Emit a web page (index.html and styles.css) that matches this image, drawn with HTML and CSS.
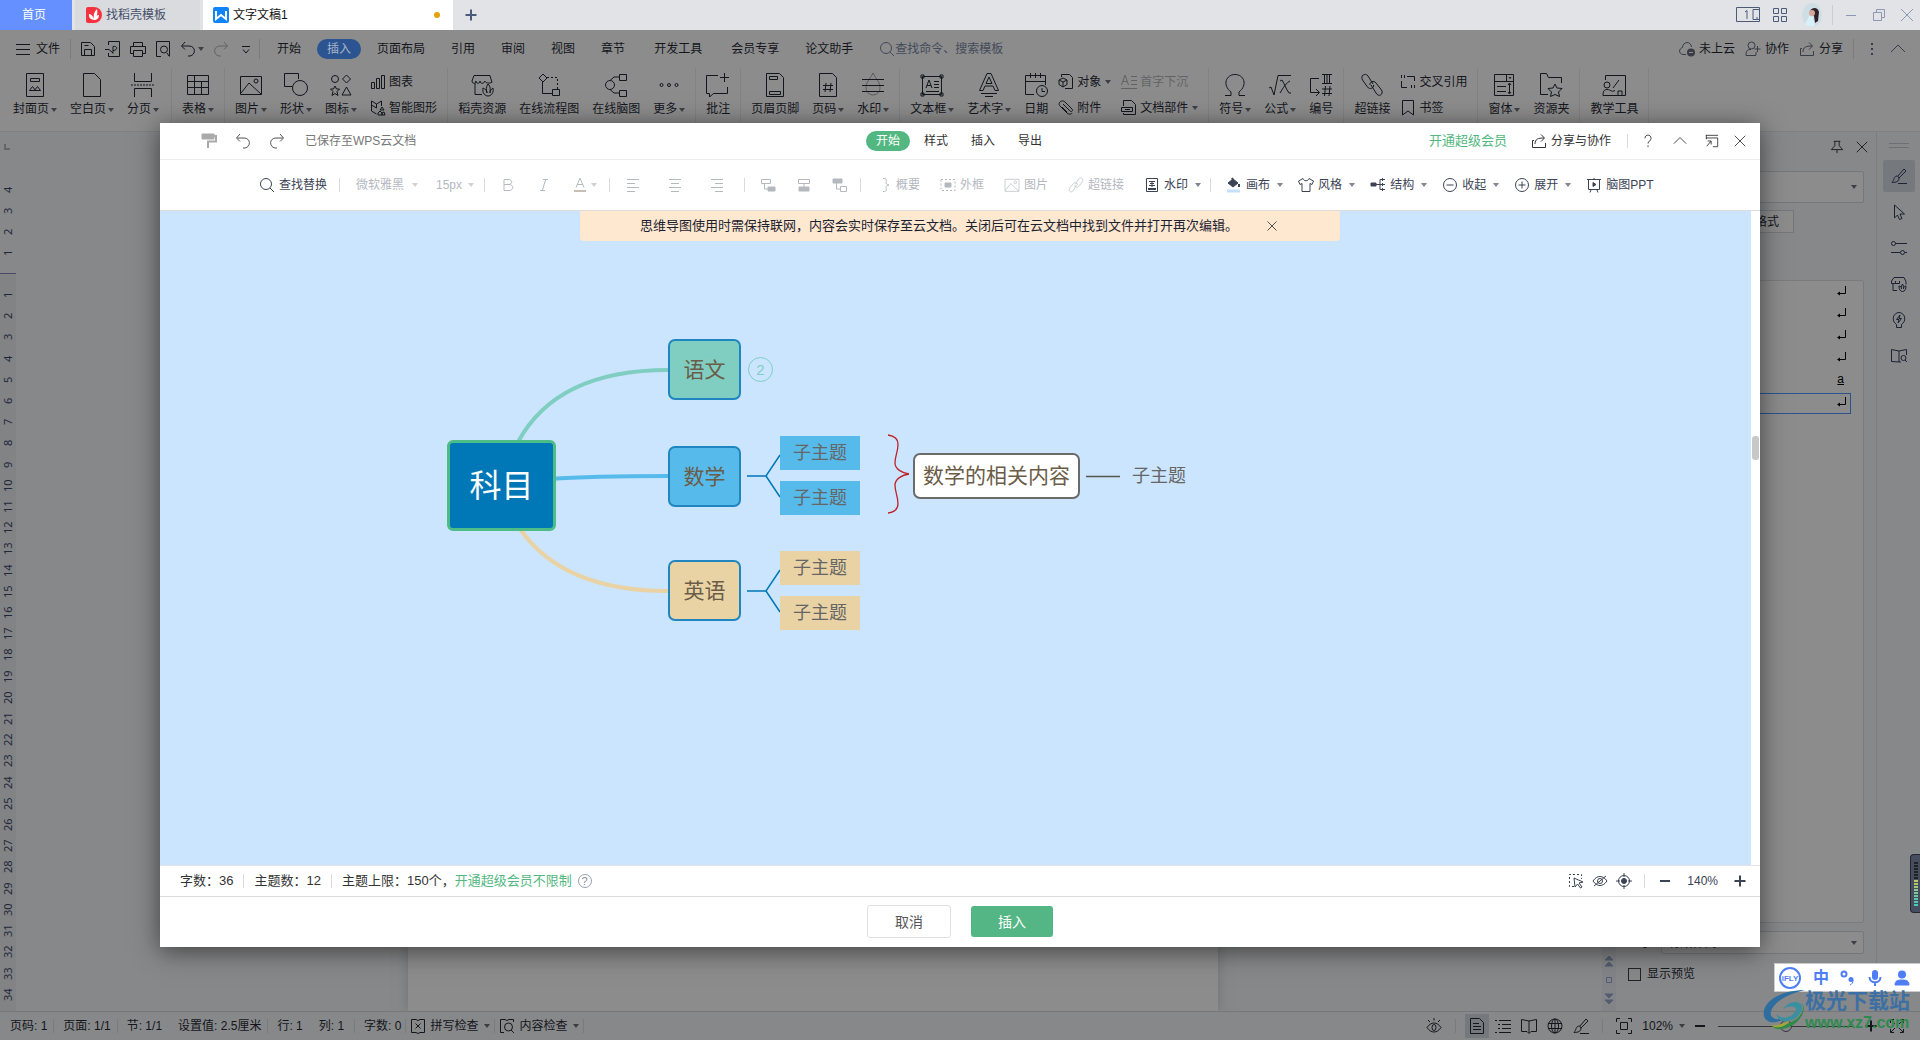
FILE: index.html
```html
<!DOCTYPE html>
<html lang="zh-CN">
<head>
<meta charset="UTF-8">
<meta name="viewport" content="width=device-width, initial-scale=1.0">
<title>文字文稿1</title>
<link rel="stylesheet" href="styles.css">
</head>
<body>
<svg class="sprite" aria-hidden="true">
    <symbol id="cover" viewBox="0 0 24 24"><path d="M3.500 .5h17v23h-17zM7.500 5.500h9v3h-9zM6.500 17.500l3-4 3 4zM11.500 17.500l3-4 3 4z"/></symbol>
    <symbol id="blank" viewBox="0 0 24 24"><path d="M3.500 .5h11l6 6v17h-17z"/></symbol>
    <symbol id="break" viewBox="0 0 24 24"><path d="M3.500 0v8.500h17V0M3.500 24v-8.500h17V24"/><path stroke-dasharray="2 1" d="M0 12h24"/></symbol>
    <symbol id="table" viewBox="0 0 24 24"><path d="M1.500 2.500h21v19h-21zM1.500 8.500h21M1.500 14.500h21M8.500 2.500v19M15.500 8.500v13"/></symbol>
    <symbol id="image" viewBox="0 0 24 24"><path d="M1.500 3.500h21v18h-21zM2 20l8-10 12 11"/><circle cx="17" cy="8" r="2"/></symbol>
    <symbol id="shapes" viewBox="0 0 24 24"><path d="M8 13.500H.5V.5h14V6"/><circle cx="16" cy="15" r="7.500"/></symbol>
    <symbol id="icons" viewBox="0 0 24 24"><circle cx="6" cy="6" r="3.500"/><path d="M17.500 2l4 4-4 4-4-4zM17.500 14l4.500 8h-9zM6 13l1.500 3h3l-2.500 2.500 1 4L6 20.500l-3 2 1-4L1.500 16h3z"/></symbol>
    <symbol id="chart" viewBox="0 0 16 16"><path d="M1.500 8.500h3v6h-3zM6.500 4.500h3v10h-3zM11.500 1.500h3v13h-3z"/></symbol>
    <symbol id="smart" viewBox="0 0 16 16"><path d="M1.500 1v10l5 3M1.500 1l5 3v4l-5-3M6.500 4l5-3v5M12 7l2 3h-4zM8 15v-2l2-2 2 2v2zM12 15v-2l2-1 1 3z"/></symbol>
    <symbol id="shop" viewBox="0 0 24 24"><path d="M5 10v11.500h7M4 2.500h16l2 7M4 2.500L2 8c0 3 4 3 4 0 0 3 4 3 4 0 0 3 4 3 5 0 0 2 5 3 7 1M13 15c-1 5 2 8 5 8 3 0 6-3 5-8-2 1-3 3-3 5 0-4 1-6-2-9-2 3-2 6-1 9 0-3-2-4-4-5z"/></symbol>
    <symbol id="flow" viewBox="0 0 24 24"><path d="M6 1l4 4-4 4-4-4zM5.500 9v11.500h10M15.500 16.500h7v6h-7z"/><path stroke-dasharray="2 2" d="M10 4.500h10.500v12"/></symbol>
    <symbol id="mind" viewBox="0 0 24 24"><circle cx="6" cy="12" r="4.500"/><path d="M6 7.500l4-3.500h5M6 16.500l4 3.500h5M15.500 1.500h7v6h-7zM15.500 17.500h7v6h-7z"/></symbol>
    <symbol id="more" viewBox="0 0 24 24"><circle cx="4.500" cy="12" r="1.500"/><circle cx="12" cy="12" r="1.500"/><circle cx="19.500" cy="12" r="1.500"/></symbol>
    <symbol id="note" viewBox="0 0 24 24"><path d="M12 2.500H.5v18h3V24l4-3.500h14V14M18.500 0v9M14 4.500h9"/></symbol>
    <symbol id="header" viewBox="0 0 24 24"><path d="M3.500 .5h13l4 4v19h-17zM6.500 3.500h8v3h-8zM6.500 18.500h11v3h-11z"/></symbol>
    <symbol id="pageno" viewBox="0 0 24 24"><path d="M3.500 .5h13l4 4v19h-17zM10 10l-1 9M15 10l-1 9M7 12.500h10M7 16.500h10"/></symbol>
    <symbol id="drop" viewBox="0 0 24 24"><path opacity=".4" d="M12 0c-3 6-7 9-7 15a7 7 0 0 0 14 0c0-6-4-9-7-15z"/><path d="M1 6.500h22M1 12.500h22M1 18.500h22"/></symbol>
    <symbol id="textbox" viewBox="0 0 24 24"><path d="M2.500 3.500h19v18h-19zM1 2h3v3H1zM20 2h3v3h-3zM1 20h3v3H1zM20 20h3v3h-3zM6 15l3-8 3 8M7 12.500h4M14 8.500h5M14 11.500h5M14 14.500h5M6 18.500h13"/></symbol>
    <symbol id="wordart" viewBox="0 0 24 24"><path d="M2.500 17.500L10 .5h4l7.500 17H18l-2-4.500H8l-2 4.500zM9 10.500h6L12 4zM4 20.500h16M8 23.500h8"/></symbol>
    <symbol id="date" viewBox="0 0 24 24"><path d="M10 21.500H1.500v-19h20V12M1.500 8.500h20M6.500 0v5M11.500 0v5M16.500 0v5M18 15v3.500h3"/><circle cx="18" cy="18" r="5.500"/></symbol>
    <symbol id="object" viewBox="0 0 16 16"><path d="M3.500 3V.5h8l3 3v11H7M5 4l4 2v4.500l-4 2.500-4-2.500V6zM1 6l4 2 4-2M5 8v5"/></symbol>
    <symbol id="clip" viewBox="0 0 16 16"><path d="M5 4l7 7c1.500 1.500 3.500-.5 2-2L7 2C4-1-1 3 2 6l7 7c2.500 2 5 1 5 0M4 7l5 5"/></symbol>
    <symbol id="dropcap" viewBox="0 0 16 16"><path d="M.5 11L4 1l3.500 10M2 7.500h4M10 2.500h6M10 6.500h6M10 10.500h6M0 14.500h16"/></symbol>
    <symbol id="parts" viewBox="0 0 16 16"><path d="M2.500 6V.5h8l4 4v10h-12V13M.5 7.500h11v4H.5zM4 9.500h5"/></symbol>
    <symbol id="omega" viewBox="0 0 24 24"><path d="M2 22.500h6V19C-1 12 3 1.500 12 1.500s13 10.500 4 17.500v3.500h6"/></symbol>
    <symbol id="formula" viewBox="0 0 24 24"><path d="M1 15l2-1 3 8L10 2.500h13M12 8l2-1c3 5 4 9 7 13h2M22 8c-3 1-7 7-10 12"/></symbol>
    <symbol id="number" viewBox="0 0 24 24"><path d="M10 5.500H1.500v14H10M7 16l3.500 3.500L7 23M13 1.500h10M13 10.500h10M15.500 2v8M18 2v8M20.500 2v8M16.500 13l-1 10M21 13l-1 10M13 16h10M13 20.500h10"/></symbol>
    <symbol id="link" viewBox="0 0 24 24"><path d="M13 11L8 3C5-1 0 3 2.500 7l5 7c2 3 7 1 6-2M11 12l5 8c3 5 8 1 5.500-3L16 10c-2-3-7-1-6 2"/></symbol>
    <symbol id="crossref" viewBox="0 0 16 16"><path d="M1.500 1v3M4.500 1v3M7 2.500h7.500V7M1.500 7v6.500H7M11.500 11v3M14.500 11v3"/></symbol>
    <symbol id="bookmark" viewBox="0 0 16 16"><path d="M2.500 .5h11v14.500L8 11l-5.500 4z"/></symbol>
    <symbol id="form" viewBox="0 0 24 24"><path d="M2.500 1.500h19v21h-19zM2.500 8.500h19M14.500 1.500v7M17 4l1 1.500L19 4M5 13.500h9M5 18.500h9M17.500 11v9M16 12l1.500-2 1.500 2M16 19l1.500 2 1.500-2"/></symbol>
    <symbol id="folder" viewBox="0 0 24 24"><path d="M9 21.500H1.500V.5h6l2 4h13V10M16 11l2 4 5 .5-3.500 3.500 1 4.500-4.500-2-4.500 2 1-4.500-3.500-3.500 5-.5z"/></symbol>
    <symbol id="teach" viewBox="0 0 24 24"><path d="M3.500 7V2.500h20v20H1c0-4 1-6 4-6 4 0 4 3 8 1M11 15l6-8M16 22v-4h4v4"/><circle cx="5" cy="12" r="3"/></symbol>
    <symbol id="save" viewBox="0 0 16 16"><path d="M1.500 1.500h9l4 4v9h-13zM4.500 14V8.500h7V14M4.500 4.500h4"/></symbol>
    <symbol id="output" viewBox="0 0 16 16"><path d="M3.500 4V.5h11v15h-11V12M0 8.500h4L8 12M8 12.500V5.500c5-1 5 4 0 4"/></symbol>
    <symbol id="print" viewBox="0 0 16 16"><path d="M3.500 5V1.500h9V5M3 12.500H.5v-7h15v7H13M3.500 9.500h9v6h-9z"/></symbol>
    <symbol id="preview" viewBox="0 0 16 16"><path d="M6 15.500H1.500V.5h13v15M12 12l2 3"/><circle cx="9" cy="8.500" r="3.500"/></symbol>
    <symbol id="undo" viewBox="0 0 16 16"><path d="M5 1L1.500 5 5 8.500M2 5h7c7 0 7 9 1 10H8"/></symbol>
    <symbol id="redo" viewBox="0 0 16 16"><path d="M11 1l3.500 4L11 8.500M14 5H7c-7 0-7 9-1 10h2"/></symbol>
    <symbol id="custom" viewBox="0 0 16 16"><path d="M4 5.500h8M5 8.500L8 12l3-3.500"/></symbol>
    <symbol id="menu" viewBox="0 0 16 16"><path d="M1 3.500h14M1 8.500h14M1 13.500h14"/></symbol>
    <symbol id="search" viewBox="0 0 16 16"><circle cx="7" cy="7" r="5.500"/><path d="M11 11l4 4"/></symbol>
    <symbol id="cloud" viewBox="0 0 16 16"><path d="M7 13.500H4c-5-1-4-6-.5-7C4 0 12 0 12.500 6"/><circle cx="12" cy="11.500" r="4" fill="currentColor" stroke="none"/><path d="M10 11.500h4" stroke="#8c8c8c"/></symbol>
    <symbol id="coop" viewBox="0 0 16 16"><circle cx="6.500" cy="4.500" r="3.500"/><path d="M11 14.500H1c0-4 1-6 4-6h1M12.500 5v6M9.500 8h6M11 11v3"/></symbol>
    <symbol id="share" viewBox="0 0 16 16"><path d="M3 7.500H1.500v7h13V10M4 11c0-5 3-6 9-6M10 1.500L13.500 5 10 8.500"/></symbol>
    <symbol id="dots" viewBox="0 0 16 16"><path d="M7 3h2M7 8h2M7 13h2" stroke-width="2"/></symbol>
    <symbol id="up" viewBox="0 0 16 16"><path d="M1 11l7-7 7 7"/></symbol>
    <symbol id="close" viewBox="0 0 16 16"><path d="M2 2l12 12M14 2L2 14"/></symbol>
    <symbol id="min" viewBox="0 0 16 16"><path d="M3 8.500h10"/></symbol>
    <symbol id="plus" viewBox="0 0 16 16"><path d="M8 2.500v11M2.500 8h11" stroke-width="2"/></symbol>
    <symbol id="minus" viewBox="0 0 16 16"><path d="M3 8h10" stroke-width="2"/></symbol>
    <symbol id="restore" viewBox="0 0 16 16"><path d="M2.500 5.500h8v8h-8zM5.500 5V2.500h8v8H11"/></symbol>
    <symbol id="grid" viewBox="0 0 16 16"><path d="M1.500 1.500h5v5h-5zM9.500 1.500h5v5h-5zM1.500 9.500h5v5h-5zM9.500 9.500h5v5h-5z"/></symbol>
    <symbol id="painter" viewBox="0 0 16 16"><path d="M1 1h12v5H1z" fill="currentColor"/><path d="M13 3h2v5.500H7V15" stroke-width="2"/></symbol>
    <symbol id="help" viewBox="0 0 16 16"><path d="M4.500 5c0-5 7-5 7 0 0 3-3.500 3-3.500 6M8 13v2"/></symbol>
    <symbol id="detach" viewBox="0 0 16 16"><path d="M1 1.500h14M1.500 1v5M1 4.500h13.500v10H9M2 14l5-6M3 8h4v4"/></symbol>
    <symbol id="bold" viewBox="0 0 16 16"><path d="M4 2.500h4c5 0 5 5 0 5H4zM4 7.500h5c5 0 5 6 0 6H4z"/></symbol>
    <symbol id="italic" viewBox="0 0 16 16"><path d="M7 2.500h5M4 13.500h5M9.500 3l-3 10"/></symbol>
    <symbol id="color" viewBox="0 0 16 16"><path d="M4 10.500L8 1l4 9.500M5 7.500h6"/><path d="M2 14h12" stroke="#c8bfb4" stroke-width="2"/></symbol>
    <symbol id="al" viewBox="0 0 16 16"><path d="M2 2.500h12M2 6.500h8M2 10.500h12M2 14.500h8"/></symbol>
    <symbol id="ac" viewBox="0 0 16 16"><path d="M2 2.500h12M4 6.500h8M2 10.500h12M4 14.500h8"/></symbol>
    <symbol id="ar" viewBox="0 0 16 16"><path d="M2 2.500h12M6 6.500h8M2 10.500h12M6 14.500h8"/></symbol>
    <symbol id="lv1" viewBox="0 0 16 16"><path d="M1.500 2.500h9v4h-9zM4.500 7v5H8"/><path d="M8 10h7v4H8z" fill="currentColor"/></symbol>
    <symbol id="lv2" viewBox="0 0 16 16"><path d="M2.500 2.500h11v4h-11zM8 7v3"/><path d="M3 10h10v4H3z" fill="currentColor"/></symbol>
    <symbol id="lv3" viewBox="0 0 16 16"><path d="M1 2h9v4H1z" fill="currentColor"/><path d="M4.500 6v6H8M8.500 9.500h6v5h-6z"/></symbol>
    <symbol id="brace" viewBox="0 0 16 16"><path d="M7 1.500c5 0 3 2 3 4 0 1 1 2.500 3 2.500-2 0-3 1.500-3 2.500 0 2 2 4-3 4"/></symbol>
    <symbol id="frame" viewBox="0 0 16 16"><path d="M1 2.500h14v11H1z" stroke-dasharray="2 2"/><path d="M5 6h6v4H5z" fill="currentColor"/></symbol>
    <symbol id="wm" viewBox="0 0 16 16"><path d="M2.500 1.500h11v13h-11zM5 4.500h6M6 6.500h4M5 8.500h6M8 4v6"/><path d="M4 12h8" stroke-width="2"/></symbol>
    <symbol id="paint" viewBox="0 0 16 16"><path d="M2 6l5-4 5 4-5 4z" fill="currentColor"/><path d="M6 1l2 4M13 7v3" stroke-width="2"/><path d="M1 14h13" stroke="#c5e0fb" stroke-width="3"/></symbol>
    <symbol id="shirt" viewBox="0 0 16 16"><path d="M5 1.500L.5 4l1.500 3.500 2-1v8h8v-8l2 1L15.500 4 11 1.500c-1 3-5 3-6 0z"/></symbol>
    <symbol id="struct" viewBox="0 0 16 16"><path d="M1 6h5v3H1z" fill="currentColor"/><path d="M6 7.500h9M15 2.500h-5v10h5M12.500 1v3M12.500 6v3M12.500 11v3"/></symbol>
    <symbol id="fold" viewBox="0 0 16 16"><circle cx="8" cy="8" r="6.500"/><path d="M4.500 8h7"/></symbol>
    <symbol id="unfold" viewBox="0 0 16 16"><circle cx="8" cy="8" r="6.500"/><path d="M4.500 8h7M8 4.500v7"/></symbol>
    <symbol id="ppt" viewBox="0 0 16 16"><path d="M1 2.500h14M2.500 3v9.500h11V3M5 13l-1 2.500M11 13l1 2.500M8 1v2"/><path d="M7 5.500v4L10 7.500z" fill="currentColor"/></symbol>
    <symbol id="pick" viewBox="0 0 16 16"><path d="M6 13.500H1.500v-12h12V6" stroke-dasharray="2 2"/><path d="M6 5l9 4-4 1 3 4-1.500 1-3-4L7 14z"/></symbol>
    <symbol id="hide" viewBox="0 0 16 16"><path d="M1 8c4-6 10-6 14 0-4 6-10 6-14 0zM2 13L14 3"/><circle cx="8" cy="8" r="2.500"/></symbol>
    <symbol id="target" viewBox="0 0 16 16"><circle cx="8" cy="8" r="5.500"/><circle cx="8" cy="8" r="2.500" fill="currentColor"/><path d="M8 0v4M8 12v4M0 8h4M12 8h4"/></symbol>
    <symbol id="pin" viewBox="0 0 16 16"><path d="M4.500 1.500h7l-1 1v4l4 4.500h-13l4-4.500v-4zM8 11v4"/></symbol>
    <symbol id="ret" viewBox="0 0 16 16"><path d="M12.500 3v7.500H5"/><path d="M4 10.500l3-2v4z" fill="currentColor" stroke="none"/></symbol>
    <symbol id="brush" viewBox="0 0 16 16"><path d="M7 8l6-7 2 2-7 7M6.500 8c-4 0-3 4-5.500 6.500 4 0 7-1 7-4.500zM7 15.500h9"/></symbol>
    <symbol id="cursor" viewBox="0 0 16 16"><path d="M3.500 1v13l3-3 2 4.500 2.500-1L9 10h4.500z"/></symbol>
    <symbol id="sliders" viewBox="0 0 16 16"><circle cx="2.500" cy="3.500" r="2"/><path d="M4.500 3.500H16M0 12.500h9M14 12.500h2"/><circle cx="11.500" cy="12.500" r="2"/></symbol>
    <symbol id="store" viewBox="0 0 16 16"><path d="M2 7v7.500h4M3 1.500h10l2 4v3M3 1.500L.5 5v2.500h4V5M4.500 7.500h4V5M8 10c0 3 1 5.500 3.500 5.500S15 13 15 10c-1.500 0-2.500 1-2.500 3 0-2 0-4-1-5-1 1-1 3-1 5 0-2-1-3-2.500-3z"/></symbol>
    <symbol id="idea" viewBox="0 0 16 16"><path d="M5.500 15.500v-3c-6-4-3-12 2.500-12s8.500 8 2.500 12v3zM9 3L5.500 7.500H8L7 11l3.500-4.500H8z"/></symbol>
    <symbol id="bookq" viewBox="0 0 16 16"><path d="M8 3L.5 1.500v12L8 14zM8 3l7.500-1.500V7M8 14h2M14 12l2 2"/><circle cx="12.500" cy="10" r="2.500"/></symbol>
    <symbol id="eye" viewBox="0 0 16 16"><path d="M1 9.500c4-6 10-6 14 0-4 6-10 6-14 0zM8 0v2.500M2 2l2 2M14 2l-2 2"/><ellipse cx="8" cy="9.500" rx="2" ry="3"/></symbol>
    <symbol id="page" viewBox="0 0 16 16"><path d="M1.500 .5h9l4 4v11h-13zM4 5.500h6M4 8.500h8M4 11.500h8"/></symbol>
    <symbol id="outline" viewBox="0 0 16 16"><path d="M4 2.500h12M7 6.500h9M7 10.500h9M4 14.500h12M0 2.500h2M3 6.500h2M3 10.500h2M0 14.500h2"/></symbol>
    <symbol id="read" viewBox="0 0 16 16"><path d="M8 3L.5 1.500v12H6l2 2 2-2h5.500v-12zM8 3v12"/></symbol>
    <symbol id="globe" viewBox="0 0 16 16"><circle cx="8" cy="8" r="7"/><ellipse cx="8" cy="8" rx="3.500" ry="7"/><path d="M1 5.500h14M1 10.500h14M8 1v14"/></symbol>
    <symbol id="fit" viewBox="0 0 16 16"><path d="M.5 4V.5H4M12 .5h3.500V4M15.500 12v3.500H12M4 15.500H.5V12M4.500 4.500h7v7h-7z"/></symbol>
    <symbol id="full" viewBox="0 0 16 16"><path d="M1.500 5V1.500H5M2 2l4 4M11 1.500h3.500V5M14 2l-4 4M14.500 11v3.500H11M14 14l-4-4M5 14.500H1.500V11M2 14l4-4"/></symbol>
    <symbol id="spell" viewBox="0 0 16 16"><path d="M6 1.500H1.500v13H6l2 1 2-1h4.500v-13H10l-2 1zM5.500 5.500l5 5M10.500 5.500l-5 5"/></symbol>
    <symbol id="check" viewBox="0 0 16 16"><path d="M5 14.500H1.500v-13H6l2 1 2-1h4.500V4M12 12l3 3"/><circle cx="9.500" cy="9" r="4"/></symbol>
</svg>

<div class="app">
    <header class="tabs">
        <button class="tab home">首页</button>
        <button class="tab shell">
            <svg class="logo" viewBox="0 0 16 16"><path d="M0 2a2 2 0 0 1 2-2h6a8 8 0 0 1 0 16H2a2 2 0 0 1-2-2z" fill="#f5333f"/><path d="M8 13C2 12 3 8 3 7c2 0 4 2 5 5-1-4 0-7 3-10 1 4 0 7-2 10 0-2 2-4 4-4 0 3-2 5-5 5z" fill="#fff"/></svg>
            找稻壳模板
        </button>
        <button class="tab doc">
            <svg class="logo" viewBox="0 0 16 16"><rect width="16" height="16" rx="2" fill="#1284fb"/><path d="M3 4v8l5-4 5 4V4" fill="none" stroke="#fff" stroke-width="2"/></svg>
            文字文稿1
            <span class="dirty"></span>
        </button>
        <button class="icon-btn add" aria-label="新建"><svg class="i16"><use href="#plus"/></svg></button>
        <div class="window-tools">
            <button class="icon-btn" aria-label="窗口"><svg class="i24" viewBox="0 0 24 16"><path d="M.5 .5h23v14H.5zM23 2.500h-6v10h6M20 11h2M9 5l2-1.500V12"/></svg></button>
            <button class="icon-btn" aria-label="应用"><svg class="i16"><use href="#grid"/></svg></button>
            <svg class="avatar" viewBox="0 0 20 24"><ellipse cx="10" cy="12" rx="10" ry="12" fill="#cfdde4"/><path d="M8 8c2-4 8-4 9 1l-1 9-3 2-1-7z" fill="#2c2228"/><ellipse cx="10" cy="10" rx="3" ry="3" fill="#d8a79b"/><path d="M3 21l4-8 4 1 2 9c-3 1-7 1-10-2z" fill="#d8f0f7"/></svg>
            <span class="vline"></span>
            <button class="icon-btn pale" aria-label="最小化"><svg class="i16"><use href="#min"/></svg></button>
            <button class="icon-btn pale" aria-label="还原"><svg class="i16"><use href="#restore"/></svg></button>
            <button class="icon-btn pale" aria-label="关闭"><svg class="i16"><use href="#close"/></svg></button>
        </div>
    </header>

    <nav class="menubar">
        <button class="label-btn file"><svg class="i16"><use href="#menu"/></svg>文件</button>
        <span class="vline"></span>
        <div class="quick">
            <button class="icon-btn" aria-label="保存"><svg class="i16"><use href="#save"/></svg></button>
            <button class="icon-btn" aria-label="输出"><svg class="i16"><use href="#output"/></svg></button>
            <button class="icon-btn" aria-label="打印"><svg class="i16"><use href="#print"/></svg></button>
            <button class="icon-btn" aria-label="打印预览"><svg class="i16"><use href="#preview"/></svg></button>
            <button class="icon-btn caret" aria-label="撤销"><svg class="i16"><use href="#undo"/></svg></button>
            <button class="icon-btn faded" aria-label="恢复"><svg class="i16"><use href="#redo"/></svg></button>
            <button class="icon-btn" aria-label="自定义"><svg class="i16"><use href="#custom"/></svg></button>
        </div>
        <span class="vline"></span>
        <div class="menus">
            <button>开始</button>
            <button class="current">插入</button>
            <button>页面布局</button>
            <button>引用</button>
            <button>审阅</button>
            <button>视图</button>
            <button>章节</button>
            <button class="extra">开发工具</button>
            <button class="extra">会员专享</button>
            <button>论文助手</button>
            <label class="search"><svg class="i16"><use href="#search"/></svg><input type="text" placeholder="查找命令、搜索模板" aria-label="查找命令"></label>
        </div>
        <div class="account">
            <button class="label-btn"><svg class="i16"><use href="#cloud"/></svg>未上云</button>
            <button class="label-btn"><svg class="i16"><use href="#coop"/></svg>协作</button>
            <button class="label-btn"><svg class="i16"><use href="#share"/></svg>分享</button>
            <span class="vline"></span>
            <button class="icon-btn" aria-label="更多"><svg class="i16"><use href="#dots"/></svg></button>
            <button class="icon-btn" aria-label="折叠功能区"><svg class="i16"><use href="#up"/></svg></button>
        </div>
    </nav>

    <div class="ribbon">
        <div class="group">
            <button class="big"><svg><use href="#cover"/></svg><span class="caret">封面页</span></button>
            <button class="big"><svg><use href="#blank"/></svg><span class="caret">空白页</span></button>
            <button class="big"><svg><use href="#break"/></svg><span class="caret">分页</span></button>
        </div>
        <div class="group">
            <button class="big"><svg><use href="#table"/></svg><span class="caret">表格</span></button>
        </div>
        <div class="group">
            <button class="big"><svg><use href="#image"/></svg><span class="caret">图片</span></button>
            <button class="big"><svg><use href="#shapes"/></svg><span class="caret">形状</span></button>
            <button class="big"><svg><use href="#icons"/></svg><span class="caret">图标</span></button>
            <div class="stack">
                <button class="label-btn"><svg class="i16"><use href="#chart"/></svg>图表</button>
                <button class="label-btn"><svg class="i16"><use href="#smart"/></svg>智能图形</button>
            </div>
        </div>
        <div class="group">
            <button class="big"><svg><use href="#shop"/></svg><span>稻壳资源</span></button>
            <button class="big"><svg><use href="#flow"/></svg><span>在线流程图</span></button>
            <button class="big"><svg><use href="#mind"/></svg><span>在线脑图</span></button>
            <button class="big"><svg><use href="#more"/></svg><span class="caret">更多</span></button>
        </div>
        <div class="group">
            <button class="big"><svg><use href="#note"/></svg><span>批注</span></button>
        </div>
        <div class="group">
            <button class="big"><svg><use href="#header"/></svg><span>页眉页脚</span></button>
            <button class="big"><svg><use href="#pageno"/></svg><span class="caret">页码</span></button>
            <button class="big"><svg><use href="#drop"/></svg><span class="caret">水印</span></button>
        </div>
        <div class="group">
            <button class="big"><svg><use href="#textbox"/></svg><span class="caret">文本框</span></button>
            <button class="big"><svg><use href="#wordart"/></svg><span class="caret">艺术字</span></button>
            <button class="big"><svg><use href="#date"/></svg><span>日期</span></button>
            <div class="stack tight">
                <button class="label-btn caret"><svg class="i16"><use href="#object"/></svg>对象</button>
                <button class="label-btn"><svg class="i16"><use href="#clip"/></svg>附件</button>
            </div>
            <div class="stack tight">
                <button class="label-btn faded"><svg class="i16"><use href="#dropcap"/></svg>首字下沉</button>
                <button class="label-btn caret"><svg class="i16"><use href="#parts"/></svg>文档部件</button>
            </div>
        </div>
        <div class="group">
            <button class="big"><svg><use href="#omega"/></svg><span class="caret">符号</span></button>
            <button class="big"><svg><use href="#formula"/></svg><span class="caret">公式</span></button>
            <button class="big"><svg><use href="#number"/></svg><span>编号</span></button>
        </div>
        <div class="group">
            <button class="big"><svg><use href="#link"/></svg><span>超链接</span></button>
            <div class="stack tight">
                <button class="label-btn"><svg class="i16"><use href="#crossref"/></svg>交叉引用</button>
                <button class="label-btn"><svg class="i16"><use href="#bookmark"/></svg>书签</button>
            </div>
        </div>
        <div class="group">
            <button class="big"><svg><use href="#form"/></svg><span class="caret">窗体</span></button>
            <button class="big"><svg><use href="#folder"/></svg><span>资源夹</span></button>
        </div>
        <div class="group">
            <button class="big"><svg><use href="#teach"/></svg><span>教学工具</span></button>
        </div>
    </div>

    <main class="workspace">
        <div class="ruler">
            <i class="tabstop"></i>
            <div class="ruler-top"><span>4</span><span>3</span><span>2</span><span>1</span></div>
            <div class="ruler-main">
                <span>1</span><span>2</span><span>3</span><span>4</span><span>5</span><span>6</span><span>7</span><span>8</span><span>9</span><span>10</span><span>11</span><span>12</span><span>13</span><span>14</span><span>15</span><span>16</span><span>17</span><span>18</span><span>19</span><span>20</span><span>21</span><span>22</span><span>23</span><span>24</span><span>25</span><span>26</span><span>27</span><span>28</span><span>29</span><span>30</span><span>31</span><span>32</span><span>33</span><span>34</span>
            </div>
        </div>
        <div class="desk"><div class="paper"></div></div>
        <div class="scroll">
            <svg class="i16" viewBox="0 0 16 16"><path d="M4 7l4-4 4 4zM4 13l4-4 4 4z" fill="currentColor"/></svg>
            <svg class="i16" viewBox="0 0 16 16"><path d="M5.500 5.500h5v5h-5z"/></svg>
            <svg class="i16" viewBox="0 0 16 16"><path d="M4 3l4 4 4-4zM4 9l4 4 4-4z" fill="currentColor"/></svg>
        </div>
        <aside class="pane">
            <div class="pane-head">
                <button class="icon-btn" aria-label="固定"><svg class="i16"><use href="#pin"/></svg></button>
                <button class="icon-btn" aria-label="关闭窗格"><svg class="i16"><use href="#close"/></svg></button>
            </div>
            <div class="select wide"><select aria-label="当前样式"><option></option></select></div>
            <button class="clear">清除格式</button>
            <ul class="styles">
                <li><svg class="i16"><use href="#ret"/></svg></li>
                <li><svg class="i16"><use href="#ret"/></svg></li>
                <li><svg class="i16"><use href="#ret"/></svg></li>
                <li><svg class="i16"><use href="#ret"/></svg></li>
                <li><u>a</u></li>
                <li class="picked"><svg class="i16"><use href="#ret"/></svg></li>
            </ul>
            <div class="show">
                <label for="show">显示:</label>
                <div class="select"><select id="show"><option>有效样式</option></select></div>
            </div>
            <label class="check"><input type="checkbox">显示预览</label>
        </aside>
        <nav class="side">
            <span class="grip"></span>
            <button class="on" aria-label="样式"><svg class="i16"><use href="#brush"/></svg></button>
            <button aria-label="选择"><svg class="i16"><use href="#cursor"/></svg></button>
            <button aria-label="设置"><svg class="i16"><use href="#sliders"/></svg></button>
            <button aria-label="稻壳"><svg class="i16"><use href="#store"/></svg></button>
            <button aria-label="推荐"><svg class="i16"><use href="#idea"/></svg></button>
            <button aria-label="查阅"><svg class="i16"><use href="#bookq"/></svg></button>
        </nav>
    </main>

    <footer class="statusbar">
        <span>页码: 1</span><i class="vline"></i>
        <span>页面: 1/1</span><i class="vline"></i>
        <span>节: 1/1</span>
        <span class="after">设置值: 2.5厘米</span><i class="vline"></i>
        <span>行: 1</span>
        <span class="after">列: 1</span><i class="vline wide"></i>
        <span>字数: 0</span><i class="vline tight"></i>
        <button class="label-btn caret"><svg class="i16"><use href="#spell"/></svg>拼写检查</button><i class="vline tight"></i>
        <button class="label-btn caret"><svg class="i16"><use href="#check"/></svg>内容检查</button><i class="vline tight"></i>
        <div class="views">
            <button class="icon-btn" aria-label="护眼模式"><svg class="i16"><use href="#eye"/></svg></button>
            <i class="vline"></i>
            <button class="icon-btn on" aria-label="页面视图"><svg class="i16"><use href="#page"/></svg></button>
            <button class="icon-btn" aria-label="大纲"><svg class="i16"><use href="#outline"/></svg></button>
            <button class="icon-btn" aria-label="阅读版式"><svg class="i16"><use href="#read"/></svg></button>
            <button class="icon-btn" aria-label="网页版式"><svg class="i16"><use href="#globe"/></svg></button>
            <button class="icon-btn" aria-label="写作模式"><svg class="i16"><use href="#brush"/></svg></button>
            <i class="vline"></i>
            <button class="icon-btn" aria-label="最佳显示比例"><svg class="i16"><use href="#fit"/></svg></button>
            <button class="label-btn caret">102%</button>
            <button class="icon-btn" aria-label="缩小"><svg class="i16"><use href="#minus"/></svg></button>
            <input class="zoom" type="range" min="0" max="100" value="50" aria-label="显示比例">
            <button class="icon-btn" aria-label="放大"><svg class="i16"><use href="#plus"/></svg></button>
            <button class="icon-btn" aria-label="全屏"><svg class="i16"><use href="#full"/></svg></button>
        </div>
    </footer>
</div>

<section class="dialog" role="dialog" aria-label="思维导图">
    <header class="dialog-head">
        <div class="history">
            <button class="icon-btn brush" aria-label="格式刷"><svg class="i16"><use href="#painter"/></svg></button>
            <button class="icon-btn" aria-label="撤销"><svg class="i16"><use href="#undo"/></svg></button>
            <button class="icon-btn" aria-label="恢复"><svg class="i16"><use href="#redo"/></svg></button>
            <span>已保存至WPS云文档</span>
        </div>
        <nav class="dialog-tabs">
            <button class="current">开始</button>
            <button>样式</button>
            <button>插入</button>
            <button>导出</button>
        </nav>
        <div class="dialog-tools">
            <a class="vip" href="#">开通超级会员</a>
            <button class="label-btn"><svg class="i16"><use href="#share"/></svg>分享与协作</button>
            <span class="vline"></span>
            <button class="icon-btn" aria-label="帮助"><svg class="i16"><use href="#help"/></svg></button>
            <button class="icon-btn" aria-label="收起"><svg class="i16"><use href="#up"/></svg></button>
            <button class="icon-btn" aria-label="新窗口"><svg class="i16"><use href="#detach"/></svg></button>
            <button class="icon-btn" aria-label="关闭"><svg class="i16"><use href="#close"/></svg></button>
        </div>
    </header>

    <div class="toolbar">
        <button class="label-btn"><svg class="i16"><use href="#search"/></svg>查找替换</button>
        <span class="vline"></span>
        <div class="set off fonts">
            <div class="select"><select aria-label="字体" disabled><option>微软雅黑</option></select></div>
            <div class="select size"><select aria-label="字号" disabled><option>15px</option></select></div>
        </div>
        <span class="vline"></span>
        <div class="set off text">
            <button class="icon-btn" aria-label="加粗"><svg class="i16"><use href="#bold"/></svg></button>
            <button class="icon-btn" aria-label="斜体"><svg class="i16"><use href="#italic"/></svg></button>
            <button class="icon-btn caret" aria-label="文字颜色"><svg class="i16"><use href="#color"/></svg></button>
        </div>
        <span class="vline"></span>
        <div class="set off align">
            <button class="icon-btn" aria-label="左对齐"><svg class="i16"><use href="#al"/></svg></button>
            <button class="icon-btn" aria-label="居中"><svg class="i16"><use href="#ac"/></svg></button>
            <button class="icon-btn" aria-label="右对齐"><svg class="i16"><use href="#ar"/></svg></button>
        </div>
        <span class="vline"></span>
        <div class="set off levels">
            <button class="icon-btn" aria-label="子主题"><svg class="i16"><use href="#lv1"/></svg></button>
            <button class="icon-btn" aria-label="同级主题"><svg class="i16"><use href="#lv2"/></svg></button>
            <button class="icon-btn" aria-label="父主题"><svg class="i16"><use href="#lv3"/></svg></button>
        </div>
        <span class="vline"></span>
        <div class="set insert">
            <button class="label-btn off"><svg class="i16"><use href="#brace"/></svg>概要</button>
            <button class="label-btn off"><svg class="i16"><use href="#frame"/></svg>外框</button>
            <button class="label-btn off"><svg class="i16"><use href="#image"/></svg>图片</button>
            <button class="label-btn off"><svg class="i16 flip"><use href="#link"/></svg>超链接</button>
            <button class="label-btn caret"><svg class="i16"><use href="#wm"/></svg>水印</button>
        </div>
        <span class="vline"></span>
        <div class="set look">
            <button class="label-btn caret"><svg class="i16"><use href="#paint"/></svg>画布</button>
            <button class="label-btn caret"><svg class="i16"><use href="#shirt"/></svg>风格</button>
            <button class="label-btn caret"><svg class="i16"><use href="#struct"/></svg>结构</button>
            <button class="label-btn caret"><svg class="i16"><use href="#fold"/></svg>收起</button>
            <button class="label-btn caret"><svg class="i16"><use href="#unfold"/></svg>展开</button>
            <button class="label-btn"><svg class="i16"><use href="#ppt"/></svg>脑图PPT</button>
        </div>
    </div>

    <div class="stage">
        <div class="canvas">
            <div class="notice">
                <span>思维导图使用时需保持联网，内容会实时保存至云文档。关闭后可在云文档中找到文件并打开再次编辑。</span>
                <button class="icon-btn" aria-label="关闭提示"><svg class="i12"><use href="#close"/></svg></button>
            </div>
            <svg class="links" viewBox="0 0 1040 440">
                <g stroke-width="4">
                    <path d="M358 231Q397 159 508 159" stroke="#80cec2"/>
                    <path d="M390 268Q430 265 508 265" stroke="#56bbeb"/>
                    <path d="M360 318C390 361 440 380 508 380" stroke="#e9d3a5"/>
                </g>
                <g stroke="#0077b6" stroke-width="1.500">
                    <path d="M587 265h19l14-21M606 265l14 21"/>
                    <path d="M587 380h19l14-21M606 380l14 21"/>
                </g>
                <path d="M728 224c7 1 10 4 10 9 0 8-3 12-3 19 0 6 7 10 14 11-7 1-14 5-14 11 0 7 3 11 3 19 0 5-3 8-10 9" stroke="#c0202a" stroke-width="1.300"/>
                <path d="M926 265.500h34" stroke="#555" stroke-width="1.500"/>
            </svg>
            <div class="node root">科目</div>
            <div class="node main chinese">语文</div>
            <div class="node count">2</div>
            <div class="node main maths">数学</div>
            <div class="node sub maths-1">子主题</div>
            <div class="node sub maths-2">子主题</div>
            <div class="node main english">英语</div>
            <div class="node sub english-1">子主题</div>
            <div class="node sub english-2">子主题</div>
            <div class="node summary">数学的相关内容</div>
            <div class="node sub summary-1">子主题</div>
        </div>
        <div class="stage-scroll"><span></span></div>
    </div>

    <div class="dialog-status">
        <span>字数：36</span><i class="vline"></i>
        <span>主题数：12</span><i class="vline"></i>
        <span>主题上限：150个，<a class="vip" href="#">开通超级会员不限制</a></span>
        <span class="tip">?</span>
        <div class="scale">
            <button class="icon-btn" aria-label="框选"><svg class="i16"><use href="#pick"/></svg></button>
            <button class="icon-btn" aria-label="隐藏"><svg class="i16"><use href="#hide"/></svg></button>
            <button class="icon-btn" aria-label="定位"><svg class="i16"><use href="#target"/></svg></button>
            <i class="vline"></i>
            <button class="icon-btn" aria-label="缩小"><svg class="i16"><use href="#minus"/></svg></button>
            <span class="percent">140%</span>
            <button class="icon-btn" aria-label="放大"><svg class="i16"><use href="#plus"/></svg></button>
        </div>
    </div>

    <footer class="actions">
        <button class="cancel">取消</button>
        <button class="ok">插入</button>
    </footer>
</section>

<div class="meter"><span></span></div>

<div class="ime">
    <svg class="ifly" viewBox="0 0 24 24"><circle cx="12" cy="12" r="10" fill="none" stroke="#4f7df5" stroke-width="2"/><text x="12" y="15" text-anchor="middle">iFLY</text></svg>
    <span>中</span>
    <svg class="i16" viewBox="0 0 16 16"><circle cx="4" cy="4" r="2.500" fill="none" stroke-width="2"/><circle cx="11" cy="9.500" r="2.500" fill="currentColor" stroke="none"/><path d="M13 10c0 3-1 4-3 5"/></svg>
    <svg class="i16" viewBox="0 0 16 16"><rect x="5" y="0" width="6" height="10" rx="3" fill="currentColor" stroke="none"/><path d="M2.500 7c0 7 11 7 11 0M8 12v4" stroke-width="2"/></svg>
    <svg class="i16" viewBox="0 0 16 16"><circle cx="8" cy="4.500" r="4" fill="currentColor" stroke="none"/><path d="M1 15c0-4 2-5 7-5s7 1 7 5z" fill="currentColor"/></svg>
</div>

<div class="brand">
    <svg viewBox="0 0 42 40">
        <path d="M42 0C18 0-2 12 1 26c2 8 14 8 20 2-8 3-15 0-13-7C11 12 24 4 42 0z" fill="#2e6da0"/>
        <path d="M20 19c8-5 17-2 11 4-6 7-15 5-17 1-1 8 12 10 20 3 8-8 6-15-2-15-5 0-9 3-12 7z" fill="#3a8fa0"/>
        <path d="M38 12c6 8-2 18-14 22-6 2-12 3-16 1 4 6 14 5 22 0 10-7 14-17 8-23z" fill="#2f8a45"/>
        <path d="M7 35c6 1 14-1 20-5-3 6-12 10-20 5z" fill="#a3a63a"/>
    </svg>
    <div><strong>极光下载站</strong><em>www.xz7.com</em></div>
</div>
</body>
</html>
```
FILE: styles.css
```css
* {
    box-sizing: border-box;
}
body {
    margin: 0;
    height: 100vh;
    overflow: hidden;
    font-family: "Liberation Sans", "Noto Sans CJK SC", sans-serif;
    font-size: 12px;
    line-height: 16px;
    color: #14161c;
    background: #878889;
}
button, select, input {
    font: inherit;
    color: inherit;
    background: none;
    border: none;
    padding: 0;
    margin: 0;
    white-space: nowrap;
}
a {
    text-decoration: none;
}
svg {
    display: block;
    flex: none;
    fill: none;
    stroke: currentColor;
}
.sprite {
    position: absolute;
    width: 0;
    height: 0;
}
.i12 {
    width: 12px;
    height: 12px;
}
.i16 {
    width: 16px;
    height: 16px;
}
.i24 {
    width: 24px;
    height: 16px;
}
.flip {
    transform: scaleX(-1);
}
.icon-btn, .label-btn {
    display: flex;
    align-items: center;
}
.label-btn {
    gap: 4px;
}
.vline {
    width: 1px;
    height: 20px;
    background: #7a7b7d;
    flex: none;
}
/* small triangle after a drop-down */
.caret::after, .select::after {
    content: "";
    display: inline-block;
    border: 3px solid transparent;
    border-top: 4px solid currentColor;
    border-bottom: 0;
    opacity: .65;
    margin-left: 2px;
    vertical-align: middle;
}
.faded {
    opacity: .35;
}

.app {
    display: flex;
    flex-direction: column;
    height: 100%;
}

/* tabs */
.tabs {
    display: flex;
    height: 30px;
    background: #e1e3e7;
    color: #4c5a78;
}
.tab {
    display: flex;
    align-items: center;
    gap: 4px;
    padding: 0 11px;
    margin-right: 3px;
}
.tab .logo {
    width: 16px;
    height: 16px;
    stroke: none;
}
.home {
    width: 72px;
    padding: 0 4px 0 0;
    justify-content: center;
    color: #fff;
    background: #6590ff;
}
.shell {
    width: 125px;
    color: #44506a;
    background: #dadbde;
}
.doc {
    width: 250px;
    margin-right: 0;
    padding: 0 13px 0 10px;
    color: #111;
    background: #fff;
}
.dirty {
    width: 6px;
    height: 6px;
    margin-left: auto;
    border-radius: 50%;
    background: #e6a10c;
}
.add {
    margin-left: 10px;
}
.window-tools {
    display: flex;
    align-items: center;
    gap: 12px;
    margin-left: auto;
    padding: 0 5px;
}
.window-tools .vline {
    background: #c8ccd4;
    margin: 0 -2px;
}
.avatar {
    width: 20px;
    height: 24px;
    stroke: none;
    margin-left: 2px;
}
.pale {
    color: #8c98b4;
}

/* menu row */
.menubar, .ribbon {
    display: flex;
    background: #8c8c8c;
}
.menubar {
    align-items: center;
    height: 38px;
    padding-left: 15px;
}
.file {
    gap: 5px;
    margin-right: 10px;
}
.quick {
    display: flex;
    align-items: center;
    gap: 9px;
    padding: 0 5px 0 9px;
}
.menus {
    display: flex;
    align-items: center;
    gap: 26px;
    padding-left: 17px;
}
.menus .current {
    margin: 0 -10px;
    padding: 2px 10px;
    border-radius: 10px;
    color: #a9b6c9;
    background: #2b5491;
}
.menus .extra {
    margin-left: 3px;
}
.search {
    display: flex;
    align-items: center;
    color: #434a5a;
}
.search input {
    width: 160px;
}
.search input::placeholder {
    color: #434a5a;
    opacity: 1;
}
.account {
    display: flex;
    align-items: center;
    gap: 10px;
    margin-left: auto;
    padding-right: 14px;
}
.account svg {
    color: #383c46;
}

/* ribbon */
.ribbon {
    height: 64px;
    padding-left: 3px;
    border-bottom: 1px solid #7f8080;
}
.group {
    display: flex;
    gap: 13px;
    padding: 5px 10px 0;
    border-right: 1px solid #828282;
}
.group:first-child {
    padding-right: 12px;
}
.big {
    display: flex;
    flex-direction: column;
    align-items: center;
    gap: 4px;
    height: 48px;
}
.big svg {
    width: 24px;
    height: 24px;
}
.stack {
    display: flex;
    flex-direction: column;
    gap: 10px;
    padding-top: 1px;
}
.stack .label-btn {
    gap: 3px;
}
.stack .caret::after {
    margin-left: 1px;
}
.tight {
    margin-left: -3px;
}

/* document area */
.workspace {
    display: flex;
    flex: 1;
    min-height: 0;
}
.ruler {
    width: 16px;
    display: flex;
    flex-direction: column;
    color: #23273a;
    font: 11px/12px "Noto Sans", sans-serif;
}
.ruler span {
    height: 14px;
    text-align: center;
    writing-mode: vertical-rl;
    transform: rotate(180deg);
}
.tabstop {
    width: 6px;
    height: 6px;
    margin: 12px 4px 0;
    border-left: 2px solid #666;
    border-bottom: 2px solid #666;
}
.ruler-top, .ruler-main {
    display: flex;
    flex-direction: column;
    align-items: center;
    justify-content: space-between;
}
.ruler-top {
    height: 124px;
    padding: 33px 0 13px;
    border-bottom: 1px solid #4a4a68;
}
.ruler-main {
    flex: 1;
    padding: 14px 0 9px;
    background: #828385;
}
.desk {
    flex: 1;
    display: flex;
    justify-content: center;
    padding-left: 8px;
}
.paper {
    width: 810px;
    background: #8c8c8c;
    box-shadow: 0 0 12px #6f7272;
}
.scroll {
    width: 14px;
    display: flex;
    flex-direction: column;
    align-items: center;
    justify-content: flex-end;
    gap: 3px;
    padding-bottom: 4px;
    color: #555c70;
    background: #838487;
}
.pane {
    width: 261px;
    display: flex;
    flex-direction: column;
    padding: 7px 12px 29px;
    border-right: 1px solid #7b7d80;
}
.pane-head {
    display: flex;
    justify-content: flex-end;
    gap: 9px;
    margin: 0 -6px 16px 0;
}
.pane-head svg {
    padding: 1px;
}
.select {
    display: flex;
    align-items: center;
}
.select select {
    flex: 1;
    min-width: 0;
    appearance: none;
    opacity: 1;
}
.pane .select {
    flex: 1;
    height: 23px;
    padding: 0 6px;
    border: 1px solid #75777a;
    border-radius: 2px;
    background: #8c8c8c;
}
.pane .wide {
    flex: none;
    height: 32px;
}
.clear {
    width: 166px;
    height: 23px;
    margin: 7px 0 47px;
    padding-right: 14px;
    text-align: right;
    border: 1px solid #75777a;
    background: #8c8c8c;
}
.styles {
    flex: 1;
    margin: 0;
    padding: 0 12px 0 0;
    list-style: none;
    border: 1px solid #797b7e;
    border-radius: 2px;
    background: #8c8c8c;
    color: #000;
}
.styles li {
    display: flex;
    justify-content: flex-end;
    align-items: center;
    height: 22px;
    padding: 0 2px 3px 0;
}
.styles u {
    margin-right: 5px;
}
.styles .picked {
    height: 21px;
    margin-top: 2px;
    padding: 0 1px 3px 0;
    border: 1px solid #2a5490;
}
.show {
    display: flex;
    align-items: center;
    gap: 6px;
    margin: 8px 0 12px;
}
.check {
    display: flex;
    align-items: center;
    gap: 6px;
}
.check input {
    appearance: none;
    width: 13px;
    height: 13px;
    border: 1px solid #222;
}
.side {
    width: 43px;
    display: flex;
    flex-direction: column;
    align-items: center;
    gap: 4px;
}
.grip {
    width: 20px;
    height: 5px;
    margin: 11px 0 8px;
    border: 1px solid #6c6f76;
    border-width: 1px 0;
}
.side button {
    display: grid;
    place-items: center;
    width: 32px;
    height: 32px;
    border-radius: 2px;
    color: #1c2233;
}
.side .on, .views .on {
    background: #75787c;
}

/* status bar */
.statusbar {
    display: flex;
    align-items: center;
    height: 29px;
    padding: 0 15px 0 10px;
    border-top: 1px solid #75777a;
    background: #878889;
}
.statusbar .vline {
    height: 14px;
    margin: 0 9px 0 6px;
}
.statusbar .after {
    margin-left: 16px;
}
.statusbar .wide {
    margin: 0 9px 0 10px;
}
.statusbar .tight {
    margin: 0 4px;
}
.views {
    display: flex;
    align-items: center;
    gap: 10px;
    margin-left: auto;
}
.views .on {
    margin: 0 -4px;
    padding: 4px;
}
.statusbar .views .vline {
    margin: 0 3px;
}
.views .label-btn {
    margin-right: -3px;
}
.zoom {
    appearance: none;
    width: 135px;
    height: 1px;
    background: #33363c;
}
.zoom::-webkit-slider-thumb {
    appearance: none;
    width: 12px;
    height: 12px;
    border: 1px solid #33363c;
    border-radius: 50%;
    background: #878889;
}

/* mind map dialog, floats above the editor */
.dialog {
    position: absolute;
    top: 123px;
    right: 160px;
    bottom: 93px;
    left: 160px;
    display: flex;
    flex-direction: column;
    color: #333;
    background: #fff;
    box-shadow: 0 4px 24px rgba(0, 0, 0, .55);
}
.dialog .vline {
    background: #d8dade;
    height: 14px;
}
.dialog-head {
    display: grid;
    grid-template-columns: 1fr auto 1fr;
    align-items: center;
    height: 37px;
    border-bottom: 1px solid #eee;
}
.history, .dialog-tabs, .dialog-tools, .toolbar, .set, .scale {
    display: flex;
    align-items: center;
}
.history {
    gap: 18px;
    padding-left: 41px;
    color: #555;
}
.history span {
    color: #777;
    margin-left: 2px;
}
.brush {
    color: #aaa;
}
.dialog-tabs {
    gap: 23px;
    margin-right: 12px;
}
.dialog-tabs .current {
    padding: 2px 10px;
    margin-right: -9px;
    border-radius: 10px;
    color: #fff;
    background: #52b781;
}
.dialog-tools {
    justify-content: flex-end;
    gap: 16px;
    padding-right: 12px;
}
.dialog-tools .label-btn {
    margin-left: 8px;
}
.dialog-tools .vline {
    margin-right: -4px;
}
.dialog-tools .icon-btn:last-child {
    margin-left: -4px;
}
.dialog-tools .icon-btn svg {
    padding: 1px;
}
.vip {
    color: #52b781;
    font-size: 13px;
}
.toolbar {
    height: 51px;
    padding-left: 99px;
    color: #3c4354;
    border-bottom: 1px solid #ddd;
}
.toolbar .vline {
    margin: 0 15px 0 12px;
}
.toolbar .caret::after {
    margin-left: 3px;
}
.off {
    color: #b4b8bf;
}
.fonts {
    margin: 0 -2px 0 1px;
}
.fonts .select {
    width: 62px;
    margin-right: 18px;
}
.fonts .size {
    width: 38px;
    margin-right: 0;
}
.text {
    gap: 20px;
}
.align {
    gap: 26px;
    margin-right: 7px;
}
.levels {
    gap: 20px;
}
.insert {
    gap: 20px;
    margin-right: -3px;
}
.look {
    gap: 15px;
}

.stage {
    flex: 1;
    display: flex;
    min-height: 0;
}
.canvas {
    flex: 1;
    position: relative;
    background: #cbe5ff;
}
.notice {
    display: flex;
    align-items: center;
    justify-content: center;
    gap: 28px;
    width: 760px;
    height: 30px;
    margin: 0 0 0 420px;
    padding-right: 2px;
    font-size: 13px;
    color: #1d2230;
    background: #ffe8d0;
    border-radius: 0 0 4px 4px;
}
.links {
    position: absolute;
    top: 0;
    left: 0;
    width: 1040px;
    height: 440px;
}
.node {
    position: absolute;
    display: flex;
    align-items: center;
    justify-content: center;
    color: #6b5c48;
}
.root {
    left: 287px;
    top: 229px;
    width: 109px;
    height: 91px;
    border: 3px solid #4dbd88;
    border-radius: 6px;
    font-size: 32px;
    color: #fff;
    background: #0077b6;
}
.main {
    left: 508px;
    width: 73px;
    height: 61px;
    border: 2px solid #1f86bf;
    border-radius: 7px;
    font-size: 21px;
}
.chinese {
    top: 128px;
    background: #80cec2;
}
.maths {
    top: 235px;
    background: #56bbeb;
}
.english {
    top: 349px;
    background: #e9d3a5;
}
.count {
    left: 588px;
    top: 146px;
    width: 25px;
    height: 25px;
    border: 1px solid #80cec2;
    border-radius: 50%;
    font-size: 15px;
    color: #80cec2;
}
.sub {
    left: 620px;
    width: 80px;
    height: 34px;
    font-size: 18px;
    color: #666;
}
.maths-1 {
    top: 225px;
    background: #56bbeb;
}
.maths-2 {
    top: 270px;
    background: #56bbeb;
}
.english-1 {
    top: 340px;
    background: #e9d3a5;
}
.english-2 {
    top: 385px;
    background: #e9d3a5;
}
.summary {
    left: 753px;
    top: 242px;
    width: 167px;
    height: 46px;
    border: 2px solid #6a6a6a;
    border-radius: 7px;
    font-size: 21px;
    background: #fff;
}
.summary-1 {
    left: 959px;
    top: 248px;
}
.stage-scroll {
    width: 9px;
    padding: 225px 1px 0;
}
.stage-scroll span {
    display: block;
    height: 24px;
    border-radius: 3px;
    background: #c8c8c8;
}

.dialog-status {
    display: flex;
    align-items: center;
    height: 32px;
    padding: 0 12px 0 20px;
    font-size: 13px;
    border-top: 1px solid #e2e4e8;
    border-bottom: 1px solid #ddd;
}
.dialog-status > .vline {
    margin: 0 10px;
}
.tip {
    width: 14px;
    height: 14px;
    margin-left: 6px;
    border: 1px solid #999faa;
    border-radius: 50%;
    color: #888f9c;
    font-size: 11px;
    line-height: 12px;
    text-align: center;
}
.scale {
    gap: 8px;
    margin-left: auto;
    color: #3c4354;
}
.scale .vline {
    margin: 0 4px;
}
.percent {
    margin: 0 6px;
    font-size: 12px;
}
.actions {
    display: flex;
    align-items: center;
    justify-content: center;
    gap: 20px;
    height: 50px;
    padding-bottom: 1px;
}
.actions button {
    width: 84px;
    height: 33px;
    border: 1px solid #e0e0e0;
    border-radius: 3px;
    font-size: 14px;
    color: #555;
}
.actions .ok {
    width: 82px;
    height: 31px;
    border: none;
    color: #fff;
    background: #55b685;
}

/* floating widgets of other programs */
.meter {
    position: absolute;
    right: 0;
    top: 854px;
    width: 10px;
    height: 59px;
    padding: 7px 2px 6px 3px;
    border: 1px solid #222631;
    border-right: none;
    border-radius: 4px 0 0 4px;
    background: #474d60;
}
.meter span {
    display: block;
    height: 44px;
    background: repeating-linear-gradient(transparent 0 2px, #474d60 2px 3px), linear-gradient(#222 38%, #c8c860 40%, #50c8b0 90%);
}
.ime {
    position: absolute;
    right: 0;
    top: 963px;
    display: flex;
    align-items: center;
    gap: 11px;
    height: 29px;
    padding: 0 10px 0 3px;
    border: 1px solid #ccc;
    border-right: none;
    color: #4f7df5;
    background: #fff;
}
.ime span {
    font-size: 16px;
    font-weight: bold;
}
.ifly {
    width: 24px;
    height: 24px;
}
.ifly text {
    font-size: 8px;
    font-weight: bold;
    fill: #4f7df5;
    stroke: none;
}
.brand {
    position: absolute;
    right: 10px;
    top: 990px;
    display: flex;
    pointer-events: none;
}
.brand svg {
    width: 42px;
    height: 40px;
    stroke: none;
}
.brand strong, .brand em {
    display: block;
    font-style: normal;
    line-height: 22px;
}
.brand strong {
    font-size: 21px;
    color: #3c70a4;
}
.brand em {
    font-size: 16px;
    font-weight: bold;
    color: #2f8a50;
}
```
